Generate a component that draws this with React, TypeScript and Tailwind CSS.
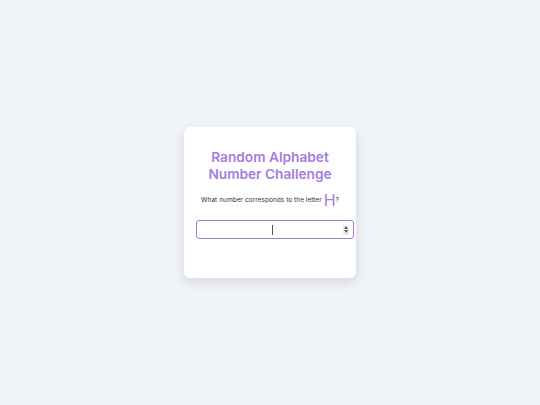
import React from "react";

export default function App() {
  return (
    <div className="w-full h-[405px] bg-[#f0f4f8] flex items-center justify-center" style={{ fontFamily: "Inter, 'Noto Sans', sans-serif" }}>
      <div className="w-[172px] h-[151px] bg-white rounded-[6px] shadow-[0_4px_12px_rgba(0,0,0,0.12)] px-3 pt-[22px] flex flex-col items-center">
        <h1 className="text-[13.7px] leading-[17px] font-semibold text-[#a57ddf] text-center">Random Alphabet Number Challenge</h1>
        <p className="mt-[10px] text-[6.6px] text-[#2d3748] flex items-end whitespace-nowrap">
          <span className="mb-[2px]">What number corresponds to the letter</span>
          <span className="text-[16px] leading-[15px] text-[#a57ddf] font-normal ml-[2px]">H</span>
          <span className="mb-[2px]">?</span>
        </p>
        <div className="mt-[12px] w-[158px] self-start h-[19px] border border-[#a57ddf] rounded-[3px] flex items-center relative">
          <span className="absolute left-[75px] top-[4px] w-px h-[10px] bg-[#555]" />
          <span className="absolute right-[4px] top-[4px] w-[6px] h-[10px] bg-[#eee] flex flex-col items-center justify-center text-[4px] leading-[4px] text-[#555]">
            <span>▲</span><span>▼</span>
          </span>
        </div>
      </div>
    </div>
  );
}
